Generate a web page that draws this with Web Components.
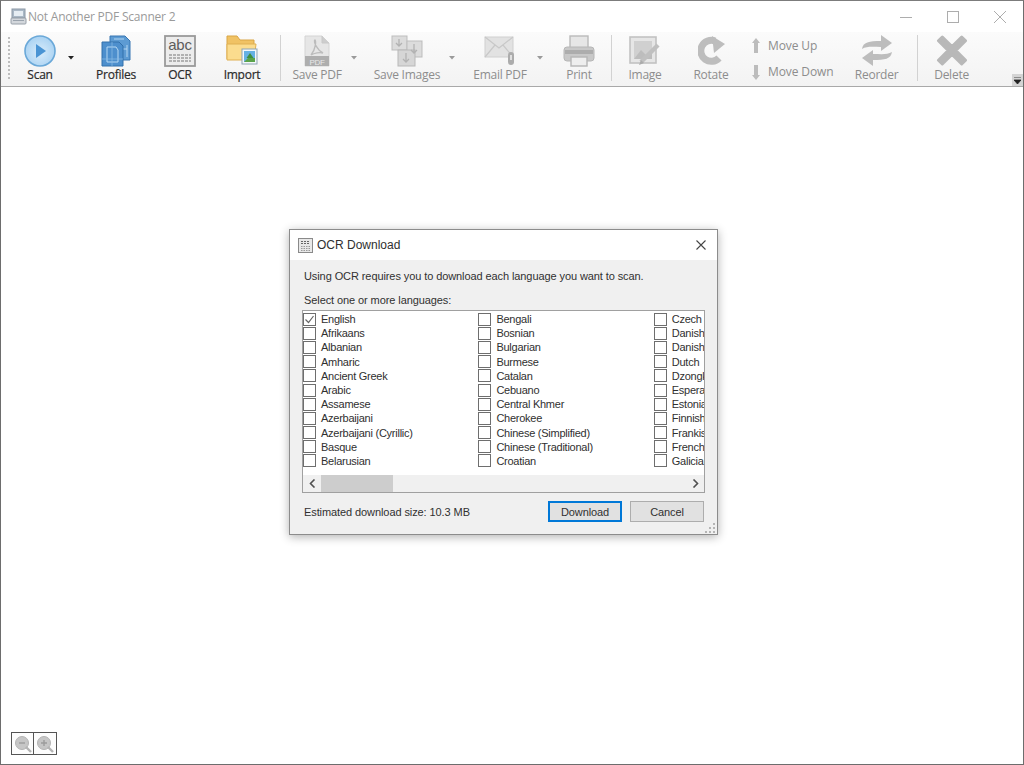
<!DOCTYPE html>
<html>
<head>
<meta charset="utf-8">
<title>Not Another PDF Scanner 2</title>
<style>
    html, body {
        margin: 0;
        height: 100%;
        overflow: hidden;
        background: #fff;
    }
</style>
</head>
<body>
<naps-window>
    <naps-titlebar slot="title" text="Not Another PDF Scanner 2"></naps-titlebar>
    <naps-toolbar slot="toolbar"></naps-toolbar>
    <zoom-controls slot="canvas"></zoom-controls>
    <ocr-dialog slot="canvas"></ocr-dialog>
</naps-window>

<script>
    (() => {

        const icons = {
            scanner: `<svg width="17" height="18" viewBox="0 0 17 18">
                <rect x="2" y="1" width="13" height="9" fill="#aab8c6" stroke="#8b98a5"/>
                <rect x="4" y="3" width="9" height="5" fill="#e6edf3"/>
                <rect x="1" y="10" width="15" height="6" rx="1" fill="#d3d7dc" stroke="#98a0a9"/>
                <rect x="3" y="12" width="11" height="1" fill="#9aa3ad"/>
            </svg>`,
            scan: `<svg width="34" height="34" viewBox="0 0 34 34">
                <defs><radialGradient id="s" cx="50%" cy="55%" r="55%"><stop offset="0" stop-color="#d9ecfb"/><stop offset="1" stop-color="#a9d2f2"/></radialGradient></defs>
                <circle cx="17" cy="17" r="15" fill="url(#s)" stroke="#6aa8d8" stroke-width="1.6"/>
                <path d="M13 10 L23 17 L13 24 Z" fill="#4a94d4"/>
            </svg>`,
            profiles: `<svg width="32" height="32" viewBox="0 0 32 32">
                <path d="M10 1 H25 L30 6 V25 H10 Z" fill="#5d9bd3" stroke="#3877b3"/>
                <path d="M14 4 H24 M27 10 V22 M20 8 V22 M14 14 H27" stroke="#b5d6f1" fill="none"/>
                <path d="M2 7 H19 L23 11 V31 H2 Z" fill="#4d8fcd" stroke="#3270ab"/>
                <path d="M7 12 H16 L18 15 V27 H7 Z" fill="none" stroke="#b6d8f3"/>
                <path d="M2 24 H23 M12 7 V31" stroke="#8bbce5" fill="none" stroke-width=".7"/>
            </svg>`,
            ocr: `<svg width="32" height="32" viewBox="0 0 32 32">
                <rect x="1" y="1" width="30" height="30" fill="#ececec" stroke="#9a9a9a" stroke-width="1.8"/>
                <text x="16" y="15" text-anchor="middle" font-family="Liberation Sans, sans-serif" font-size="15" fill="#5c5c5c">abc</text>
                <path d="M5 20 H27 M5 23 H27 M5 26 H27" stroke="#777" stroke-dasharray="3 1" fill="none"/>
            </svg>`,
            ocrSmall: `<svg width="15" height="15" viewBox="0 0 15 15">
                <rect x=".5" y=".5" width="14" height="14" fill="#e8e8e8" stroke="#8a8a8a"/>
                <path d="M3 3.5 H12 M3 5.5 H12" stroke="#666" stroke-dasharray="2 1"/>
                <path d="M3 8.5 H12 M3 10.5 H12 M3 12.5 H12" stroke="#999" stroke-dasharray="1.5 1"/>
            </svg>`,
            importFolder: `<svg width="32" height="31" viewBox="0 0 32 31">
                <path d="M1 1 H11 L14 5 H28 V24 H1 Z" fill="#f0c264" stroke="#d9a544"/>
                <path d="M1 9 H30 L28 25 H1 Z" fill="#fbdc8e" stroke="#e0b052"/>
                <rect x="16" y="14" width="15" height="15" fill="#f4f8fb" stroke="#8ea3b3"/>
                <rect x="18" y="16" width="11" height="11" fill="#65b1e4"/>
                <path d="M18 27 L22 23 L29 23 V27 Z" fill="#5aa34a"/>
                <path d="M24 18 L27.5 23 H20.5 Z" fill="#3f8f3f"/>
            </svg>`,
            pdf: `<svg width="26" height="32" viewBox="0 0 26 32">
                <path d="M1 1 H18 L25 8 V31 H1 Z" fill="#e6e6e6" stroke="#d4d4d4"/>
                <path d="M18 1 V8 H25" fill="#cdcdcd" stroke="#c8c8c8"/>
                <path d="M7 20 C12 14 12 6 11 5 C9 6 13 15 19 18 C16 17 10 18 7 20 Z" fill="none" stroke="#bcbcbc" stroke-width="1.4"/>
                <rect x="1" y="21" width="24" height="10" fill="#aeaeae"/>
                <text x="13" y="29.5" text-anchor="middle" font-family="Liberation Sans, sans-serif" font-size="8" fill="#e8e8e8">PDF</text>
            </svg>`,
            images: `<svg width="32" height="32" viewBox="0 0 32 32">
                <rect x="1" y="1" width="15" height="14" fill="#dcdcdc" stroke="#bdbdbd"/>
                <rect x="16" y="6" width="15" height="16" fill="#dcdcdc" stroke="#bdbdbd"/>
                <rect x="7" y="15" width="17" height="16" fill="#d6d6d6" stroke="#b8b8b8"/>
                <path d="M8 4 V11 M5 8 L8 11 L11 8 M23 9 V18 M20 15 L23 18 L26 15 M15 18 V27 M12 24 L15 27 L18 24" fill="none" stroke="#b2b2b2" stroke-width="1.3"/>
            </svg>`,
            email: `<svg width="32" height="30" viewBox="0 0 32 30">
                <rect x="1" y="1" width="28" height="20" fill="#e2e2e2" stroke="#d0d0d0"/>
                <path d="M1 1 L15 12 L29 1 M1 21 L11 9 M29 21 L19 9" fill="none" stroke="#c8c8c8" stroke-width="1.2"/>
                <rect x="24" y="16" width="6" height="13" rx="3" fill="#acacac"/>
                <rect x="26" y="19" width="2" height="5" fill="#e0e0e0"/>
            </svg>`,
            print: `<svg width="32" height="32" viewBox="0 0 32 32">
                <rect x="7" y="1" width="18" height="13" fill="#e6e6e6" stroke="#bababa" stroke-width="1.4"/>
                <rect x="1" y="12" width="30" height="14" rx="3" fill="#c8c8c8" stroke="#b6b6b6"/>
                <rect x="2" y="15" width="28" height="4" fill="#adadad"/>
                <rect x="8" y="22" width="16" height="9" fill="#eeeeee" stroke="#b6b6b6" stroke-width="1.4"/>
            </svg>`,
            image: `<svg width="32" height="30" viewBox="0 0 32 30">
                <rect x="1" y="1" width="26" height="26" fill="#e6e6e6" stroke="#c2c2c2" stroke-width="1.6"/>
                <rect x="5" y="5" width="18" height="18" fill="#d0d0d0"/>
                <path d="M5 23 L12 14 L17 19 L23 14 V23 Z" fill="#bdbdbd"/>
                <path d="M12 26 L29 9" stroke="#c0c0c0" stroke-width="4.5"/>
                <path d="M10 29 L12 24 L15 27 Z" fill="#ababab"/>
            </svg>`,
            rotate: `<svg width="27" height="30" viewBox="0 0 27 30">
                <path d="M21 22 A10.5 10.5 0 1 1 17 5" fill="none" stroke="#bdbdbd" stroke-width="7"/>
                <path d="M14 0 L27 8 L16 17 Z" fill="#bdbdbd"/>
            </svg>`,
            up: `<svg width="10" height="16" viewBox="0 0 10 16"><path d="M5 0 L9 5 H7 V15 H3 V5 H1 Z" fill="#bcbcbc"/></svg>`,
            down: `<svg width="10" height="16" viewBox="0 0 10 16"><path d="M5 16 L9 11 H7 V1 H3 V11 H1 Z" fill="#bcbcbc"/></svg>`,
            reorder: `<svg width="32" height="31" viewBox="0 0 32 31">
                <path d="M1 14 C2 7 8 6 20 6 V0 L31 8 L20 16 V12 C12 12 6 11 1 14 Z" fill="#bdbdbd"/>
                <path d="M31 17 C30 24 24 25 12 25 V31 L1 23 L12 15 V19 C20 19 26 20 31 17 Z" fill="#bdbdbd"/>
            </svg>`,
            remove: `<svg width="32" height="31" viewBox="0 0 32 32">
                <path d="M6 2 L16 12 L26 2 L30 6 L20 16 L30 26 L26 30 L16 20 L6 30 L2 26 L12 16 L2 6 Z" fill="#b8b8b8" stroke="#b8b8b8" stroke-width="3" stroke-linejoin="round"/>
            </svg>`,
            zoomOut: `<svg width="18" height="18" viewBox="0 0 18 18">
                <circle cx="8" cy="8" r="6.5" fill="#c6c6c6" stroke="#b4b4b4"/>
                <path d="M5 8 H11" stroke="#9c9c9c" stroke-width="1.4"/>
                <path d="M12 12 L17 17" stroke="#b4b4b4" stroke-width="2.4"/>
            </svg>`,
            zoomIn: `<svg width="18" height="18" viewBox="0 0 18 18">
                <circle cx="8" cy="8" r="6.5" fill="#c6c6c6" stroke="#b4b4b4"/>
                <path d="M5 8 H11 M8 5 V11" stroke="#9c9c9c" stroke-width="1.4"/>
                <path d="M12 12 L17 17" stroke="#b4b4b4" stroke-width="2.4"/>
            </svg>`
        };

        const define = (name, cls) => {
            if (!window.customElements.get(name)) {
                window.customElements.define(name, cls);
            }
        };

        class NapsWindow extends HTMLElement {
            constructor() {
                super();
                this.attachShadow({ mode: "open" }).innerHTML = `
                    <style>
                        :host {
                            display: flex;
                            flex-direction: column;
                            box-sizing: border-box;
                            width: 1024px;
                            height: 765px;
                            border: 1px solid #6d6d6d;
                            border-top-color: #7c7c7c;
                            background: #fff;
                        }
                        #canvas {
                            flex: 1;
                            position: relative;
                            background: #fff;
                        }
                    </style>
                    <slot name="title"></slot>
                    <slot name="toolbar"></slot>
                    <div id="canvas"><slot name="canvas"></slot></div>`;
            }
        }

        class NapsTitlebar extends HTMLElement {
            constructor() {
                super();
                this.attachShadow({ mode: "open" }).innerHTML = `
                    <style>
                        :host {
                            display: flex;
                            align-items: center;
                            height: 31px;
                            padding-left: 9px;
                            background: #fff;
                            font: 12px "Open Sans", sans-serif;
                            color: #9a9a9a;
                        }
                        #title { margin-left: 1px; flex: 1; letter-spacing: -.22px; }
                        .ctl { height: 31px; display: flex; align-items: center; justify-content: center; }
                    </style>
                    ${icons.scanner}
                    <span id="title">${this.getAttribute("text")}</span>
                    <span class="ctl" style="width:47px"><svg width="12" height="12"><path d="M0 6.5 H12" stroke="#adadad"/></svg></span>
                    <span class="ctl" style="width:48px"><svg width="12" height="12"><rect x=".5" y=".5" width="11" height="11" fill="none" stroke="#adadad"/></svg></span>
                    <span class="ctl" style="width:46px"><svg width="12" height="12"><path d="M0 0 L12 12 M12 0 L0 12" stroke="#adadad"/></svg></span>`;
            }
        }

        class ToolButton extends HTMLElement {
            constructor() {
                super();
                const off = this.hasAttribute("disabled");
                this.attachShadow({ mode: "open" }).innerHTML = `
                    <style>
                        :host {
                            display: flex;
                            flex-direction: column;
                            align-items: center;
                            height: 54px;
                            flex: none;
                            font: 12px "Open Sans", sans-serif;
                            letter-spacing: -.25px;
                            color: ${off ? "#8d8d8d" : "#2b2b2b"};
                        }
                        #icon {
                            flex: none;
                            height: 33px;
                            margin-top: 2px;
                            display: flex;
                            align-items: center;
                        }
                        #label {
                            flex: none;
                            line-height: 16px;
                            white-space: nowrap;
                            ${off ? "" : "-webkit-text-stroke: .2px #2b2b2b;"}
                        }
                    </style>
                    <div id="icon"><slot></slot></div>
                    <div id="label">${this.getAttribute("label")}</div>`;
            }
        }

        class ToolArrow extends HTMLElement {
            constructor() {
                super();
                this.attachShadow({ mode: "open" }).innerHTML = `
                    <style>
                        :host {
                            display: flex;
                            flex: none;
                            width: 10px;
                            height: 54px;
                            align-items: flex-start;
                            justify-content: center;
                        }
                        svg { margin-top: 24px; }
                    </style>
                    <svg width="6" height="4"><path d="M0 0 H6 L3 3.5 Z" fill="${this.getAttribute("color") || "#9a9a9a"}"/></svg>`;
            }
        }

        class ToolSeparator extends HTMLElement {
            constructor() {
                super();
                this.attachShadow({ mode: "open" }).innerHTML = `
                    <style>
                        :host {
                            display: block;
                            flex: none;
                            width: 1px;
                            height: 46px;
                            margin-top: 3px;
                            background: #d2d2d2;
                        }
                    </style>`;
            }
        }

        class MoveStack extends HTMLElement {
            constructor() {
                super();
                this.attachShadow({ mode: "open" }).innerHTML = `
                    <style>
                        :host {
                            display: flex;
                            flex-direction: column;
                            flex: none;
                            gap: 9px;
                            padding-top: 5px;
                            font: 12px "Open Sans", sans-serif;
                            letter-spacing: -.1px;
                            color: #8d8d8d;
                        }
                        .row { display: flex; align-items: center; gap: 7px; height: 17px; white-space: nowrap; }
                    </style>
                    <div class="row">${icons.up}<span>Move Up</span></div>
                    <div class="row">${icons.down}<span>Move Down</span></div>`;
            }
        }

        class NapsToolbar extends HTMLElement {
            constructor() {
                super();
                const grip = `<svg width="3" height="44" style="flex:none;margin:5px 0 0 7px">
                    ${Array.from({ length: 11 }, (_, i) => `<rect x="0" y="${i * 4}" width="2" height="2" fill="#bdbdbd"/>`).join("")}
                </svg>`;
                this.attachShadow({ mode: "open" }).innerHTML = `
                    <style>
                        :host {
                            display: flex;
                            position: relative;
                            box-sizing: border-box;
                            height: 55px;
                            background: linear-gradient(#fbfbfb, #f3f3f3);
                            border-bottom: 1px solid #a9a9a9;
                        }
                        #more {
                            position: absolute;
                            right: 0;
                            bottom: 0;
                            width: 11px;
                            height: 12px;
                            background: #d4d4d4;
                        }
                        #more svg { display: block; margin: 3px 0 0 2px; }
                    </style>
                    ${grip}
                    <tool-button label="Scan" style="width:52px;margin-left:3px">${icons.scan}</tool-button>
                    <tool-arrow color="#222"></tool-arrow>
                    <tool-button label="Profiles" style="width:52px;margin-left:14px">${icons.profiles}</tool-button>
                    <tool-button label="OCR" style="width:52px;margin-left:12px">${icons.ocr}</tool-button>
                    <tool-button label="Import" style="width:52px;margin-left:10px">${icons.importFolder}</tool-button>
                    <tool-separator style="margin-left:12px"></tool-separator>
                    <tool-button disabled label="Save PDF" style="width:52px;margin-left:10px">${icons.pdf}</tool-button>
                    <tool-arrow style="margin-left:6px"></tool-arrow>
                    <tool-button disabled label="Save Images" style="width:70px;margin-left:13px">${icons.images}</tool-button>
                    <tool-arrow style="margin-left:5px"></tool-arrow>
                    <tool-button disabled label="Email PDF" style="width:60px;margin-left:13px">${icons.email}</tool-button>
                    <tool-arrow style="margin-left:5px"></tool-arrow>
                    <tool-button disabled label="Print" style="width:52px;margin-left:8px">${icons.print}</tool-button>
                    <tool-separator style="margin-left:6px"></tool-separator>
                    <tool-button disabled label="Image" style="width:46px;margin-left:10px">${icons.image}</tool-button>
                    <tool-button disabled label="Rotate" style="width:46px;margin-left:20px">${icons.rotate}</tool-button>
                    <move-stack style="margin-left:17px"></move-stack>
                    <tool-button disabled label="Reorder" style="width:54px;margin-left:16px">${icons.reorder}</tool-button>
                    <tool-separator style="margin-left:13px"></tool-separator>
                    <tool-button disabled label="Delete" style="width:52px;margin-left:8px">${icons.remove}</tool-button>
                    <div id="more"><svg width="7" height="7"><path d="M0 0 H7 M0 3 H7 L3.5 7 Z" stroke="#222" stroke-width=".8" fill="#222"/></svg></div>`;
            }
        }

        class ZoomControls extends HTMLElement {
            constructor() {
                super();
                this.attachShadow({ mode: "open" }).innerHTML = `
                    <style>
                        :host {
                            position: absolute;
                            left: 10px;
                            bottom: 9px;
                            display: flex;
                        }
                        .btn {
                            box-sizing: border-box;
                            width: 23px;
                            height: 23px;
                            border: 1px solid #555;
                            display: flex;
                            align-items: center;
                            justify-content: center;
                            background: #fdfdfd;
                        }
                        .btn + .btn { margin-left: -1px; width: 24px; }
                    </style>
                    <div class="btn">${icons.zoomOut}</div>
                    <div class="btn">${icons.zoomIn}</div>`;
            }
        }

        class LangCheck extends HTMLElement {
            constructor() {
                super();
                const checked = this.hasAttribute("checked");
                this.attachShadow({ mode: "open" }).innerHTML = `
                    <style>
                        :host {
                            display: flex;
                            align-items: center;
                            height: 14.2px;
                            white-space: nowrap;
                            letter-spacing: -.25px;
                        }
                        #box {
                            box-sizing: border-box;
                            flex: none;
                            width: 13px;
                            height: 13px;
                            border: 1px solid #6e6e6e;
                            background: #fff;
                            margin-right: 5px;
                        }
                        svg { display: block; }
                    </style>
                    <div id="box">${checked ? `<svg width="11" height="11"><path d="M1.5 5.5 L4.5 8.5 L9.5 2" fill="none" stroke="#666" stroke-width="1.2"/></svg>` : ""}</div>
                    <span>${this.getAttribute("text")}</span>`;
            }
        }

        const LANGUAGES = [
            ["English", "Afrikaans", "Albanian", "Amharic", "Ancient Greek", "Arabic", "Assamese", "Azerbaijani", "Azerbaijani (Cyrillic)", "Basque", "Belarusian"],
            ["Bengali", "Bosnian", "Bulgarian", "Burmese", "Catalan", "Cebuano", "Central Khmer", "Cherokee", "Chinese (Simplified)", "Chinese (Traditional)", "Croatian"],
            ["Czech", "Danish", "Danish", "Dutch", "Dzongkha", "Esperanto", "Estonian", "Finnish", "Frankish", "French", "Galician"]
        ];

        class LangList extends HTMLElement {
            constructor() {
                super();
                const cols = LANGUAGES.map(col => `<div class="col">${col.map(name =>
                    `<lang-check text="${name}"${name === "English" ? " checked" : ""}></lang-check>`).join("")}</div>`).join("");
                this.attachShadow({ mode: "open" }).innerHTML = `
                    <style>
                        :host {
                            display: block;
                            box-sizing: border-box;
                            height: 183px;
                            border: 1px solid #a0a0a0;
                            background: #fff;
                        }
                        #items {
                            display: flex;
                            height: 164px;
                            overflow: hidden;
                            box-sizing: border-box;
                            padding-top: 1px;
                        }
                        .col { flex: none; width: 175.4px; }
                        #bar {
                            display: flex;
                            align-items: center;
                            height: 17px;
                            background: #f0f0f0;
                        }
                        .arrow { flex: none; width: 18px; display: flex; justify-content: center; }
                        #track { flex: 1; height: 17px; }
                        #thumb { width: 72px; height: 17px; background: #cdcdcd; }
                    </style>
                    <div id="items">${cols}</div>
                    <div id="bar">
                        <span class="arrow"><svg width="7" height="9"><path d="M5.5 .5 L1.5 4.5 L5.5 8.5" fill="none" stroke="#505050" stroke-width="1.6"/></svg></span>
                        <div id="track"><div id="thumb"></div></div>
                        <span class="arrow"><svg width="7" height="9"><path d="M1.5 .5 L5.5 4.5 L1.5 8.5" fill="none" stroke="#505050" stroke-width="1.6"/></svg></span>
                    </div>`;
            }
        }

        class DlgButton extends HTMLElement {
            constructor() {
                super();
                const primary = this.hasAttribute("primary");
                this.attachShadow({ mode: "open" }).innerHTML = `
                    <style>
                        :host {
                            display: flex;
                            flex: none;
                            align-items: center;
                            justify-content: center;
                            box-sizing: border-box;
                            width: 74px;
                            height: 21px;
                            background: #e1e1e1;
                            border: ${primary ? "2px solid #0078d7" : "1px solid #adadad"};
                        }
                    </style>
                    <slot></slot>`;
            }
        }

        class OcrDialog extends HTMLElement {
            constructor() {
                super();
                this.attachShadow({ mode: "open" }).innerHTML = `
                    <style>
                        :host {
                            position: absolute;
                            left: 288px;
                            top: 142px;
                            box-sizing: border-box;
                            width: 429px;
                            height: 306px;
                            display: flex;
                            flex-direction: column;
                            border: 1px solid #8c8c8c;
                            background: #f0f0f0;
                            box-shadow: 0 2px 9px rgba(0, 0, 0, .3);
                            font: 11px "Liberation Sans", Arial, sans-serif;
                            letter-spacing: -.09px;
                            color: #303030;
                        }
                        header {
                            display: flex;
                            align-items: center;
                            height: 30px;
                            flex: none;
                            padding: 0 11px 0 8px;
                            background: #fff;
                            font-size: 12px;
                            letter-spacing: 0;
                        }
                        header span { flex: 1; margin-left: 4px; }
                        main {
                            flex: 1;
                            display: flex;
                            flex-direction: column;
                            padding: 9px 13px 0 14px;
                            position: relative;
                        }
                        #intro { height: 15px; line-height: 15px; }
                        #select { height: 15px; line-height: 15px; margin-top: 9px; }
                        lang-list { margin: 2px -1px 0 -2px; }
                        footer {
                            display: flex;
                            align-items: center;
                            gap: 8px;
                            margin-top: 8px;
                        }
                        footer span { flex: 1; }
                        #grip { position: absolute; right: 1px; bottom: 1px; }
                    </style>
                    <header>
                        ${icons.ocrSmall}
                        <span>OCR Download</span>
                        <svg width="10" height="10"><path d="M.5 .5 L9.5 9.5 M9.5 .5 L.5 9.5" stroke="#444" stroke-width="1.1"/></svg>
                    </header>
                    <main>
                        <div id="intro">Using OCR requires you to download each language you want to scan.</div>
                        <div id="select">Select one or more languages:</div>
                        <lang-list></lang-list>
                        <footer>
                            <span>Estimated download size: 10.3 MB</span>
                            <dlg-button primary>Download</dlg-button>
                            <dlg-button>Cancel</dlg-button>
                        </footer>
                        <svg id="grip" width="11" height="11">
                            <path d="M8 1 h2 v2 h-2 Z M4 5 h2 v2 h-2 Z M8 5 h2 v2 h-2 Z M0 9 h2 v2 h-2 Z M4 9 h2 v2 h-2 Z M8 9 h2 v2 h-2 Z" fill="#b5b5b5"/>
                        </svg>
                    </main>`;
            }
        }

        define("tool-button", ToolButton);
        define("tool-arrow", ToolArrow);
        define("tool-separator", ToolSeparator);
        define("move-stack", MoveStack);
        define("lang-check", LangCheck);
        define("lang-list", LangList);
        define("dlg-button", DlgButton);
        define("zoom-controls", ZoomControls);
        define("ocr-dialog", OcrDialog);
        define("naps-titlebar", NapsTitlebar);
        define("naps-toolbar", NapsToolbar);
        define("naps-window", NapsWindow);
    })();
</script>
</body>
</html>
